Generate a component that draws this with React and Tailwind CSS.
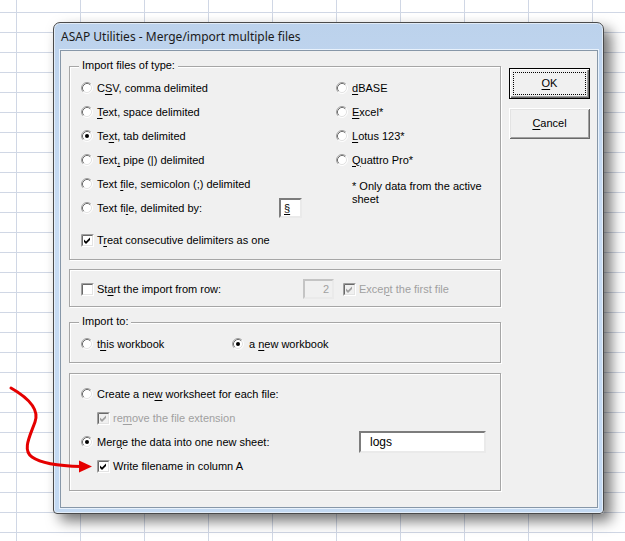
function K({ children }) {
  return <span className="underline underline-offset-[2px]">{children}</span>;
}

function Radio({ checked }) {
  return (
    <svg width="12" height="12" viewBox="0 0 12 12" className="shrink-0">
      <circle cx="6" cy="6" r="5" fill="#fff" />
      <path d="M2.11 9.89A5.5 5.5 0 0 1 9.89 2.11" fill="none" stroke="#a0a0a0" />
      <path d="M9.89 2.11A5.5 5.5 0 0 1 2.11 9.89" fill="none" stroke="#fff" />
      <path d="M2.82 9.18A4.5 4.5 0 0 1 9.18 2.82" fill="none" stroke="#6f6f6f" />
      <path d="M9.18 2.82A4.5 4.5 0 0 1 2.82 9.18" fill="none" stroke="#e3e3e3" />
      {checked && <circle cx="6" cy="6" r="2" fill="#000" />}
    </svg>
  );
}

function Check({ checked, disabled }) {
  return (
    <svg width="13" height="13" viewBox="0 0 13 13" className="shrink-0">
      <rect x="0" y="0" width="13" height="13" fill="#fff" />
      <rect x="1" y="1" width="11" height="11" fill="#e3e3e3" />
      <path d="M0.5 12.5V0.5H12.5" fill="none" stroke="#a0a0a0" />
      <path d="M1.5 11.5V1.5H11.5" fill="none" stroke="#696969" />
      <rect x="2" y="2" width="9" height="9" fill={disabled ? '#f0f0f0' : '#fff'} />
      {checked && (
        <polygon points="3,5.5 5,7.5 9,3.5 9,6 5,10 3,8" fill={disabled ? '#a0a0a0' : '#000'} />
      )}
    </svg>
  );
}

function Group({ legend, className, children }) {
  return (
    <div className={`relative border border-[#a6a6a6] shadow-[1px_1px_0_#fff,inset_1px_1px_0_#fff] ${className}`}>
      {legend && (
        <span className="absolute left-[9px] top-[-8px] bg-[#f0f0f0] px-[3px] leading-[13px]">
          {legend}
        </span>
      )}
      {children}
    </div>
  );
}

function RadioRow({ checked, children }) {
  return (
    <div className="flex h-6 items-center gap-1">
      <Radio checked={checked} />
      <span>{children}</span>
    </div>
  );
}

export default function App() {
  return (
    <div className="relative h-[541px] w-[625px] overflow-hidden bg-white bg-[linear-gradient(to_right,#d0d7e5_1px,transparent_1px),linear-gradient(to_bottom,#d0d7e5_1px,transparent_1px)] bg-[length:64px_20px] bg-[position:16px_12px] font-['Liberation_Sans',Arial,sans-serif] text-[11px] leading-[13px] text-black">
      <div className="absolute left-[53px] top-[22px] flex h-[492px] w-[551px] flex-col rounded-t-[7px] rounded-b-[4px] border border-[#4a4a4a] bg-[linear-gradient(to_bottom,#bcd2ec,#c9ddf4_40%,#c3d9f2)] shadow-[7px_7px_14px_rgba(0,0,0,0.55),inset_0_0_0_1px_rgba(255,255,255,0.55)]">
        <div className="flex h-[27px] items-center pl-[7px] font-['Noto_Sans',sans-serif] text-[12px] text-[#1b1b1b]">
          ASAP Utilities - Merge/import multiple files
        </div>
        <div className="ml-[6px] flex h-[458px] w-[538px] border border-[#8797a8] bg-[#f0f0f0] pl-[8px] pt-[15px] shadow-[0_0_0_1px_#e9f2fc]">
          <div className="flex w-[432px] flex-col">
            <Group legend="Import files of type:" className="pb-[7px] pl-[11px] pt-[9px]">
              <div className="flex">
                <div className="w-[255px]">
                  <RadioRow>
                    C<K>S</K>V, comma delimited
                  </RadioRow>
                  <RadioRow>
                    <K>T</K>ext, space delimited
                  </RadioRow>
                  <RadioRow checked>
                    Te<K>x</K>t, tab delimited
                  </RadioRow>
                  <RadioRow>
                    Text<K>,</K> pipe (|) delimited
                  </RadioRow>
                  <RadioRow>
                    Text <K>f</K>ile, semicolon (;) delimited
                  </RadioRow>
                  <div className="flex h-6 items-center">
                    <Radio />
                    <span className="ml-1 w-[182px]">
                      Text fi<K>l</K>e, delimited by:
                    </span>
                    <div className="flex h-[20px] w-[23px] items-center border-2 border-b-[#eaeaea] border-l-[#7c7c7c] border-r-[#eaeaea] border-t-[#7c7c7c] bg-white pl-[3px]">
                      <K>§</K>
                    </div>
                  </div>
                </div>
                <div>
                  <RadioRow>
                    <K>d</K>BASE
                  </RadioRow>
                  <RadioRow>
                    <K>E</K>xcel*
                  </RadioRow>
                  <RadioRow>
                    <K>L</K>otus 123*
                  </RadioRow>
                  <RadioRow>
                    <K>Q</K>uattro Pro*
                  </RadioRow>
                  <p className="mt-2 w-[154px] pl-4">* Only data from the active sheet</p>
                </div>
              </div>
              <div className="mt-2 flex h-6 items-center gap-[3px]">
                <Check checked />
                <span>
                  T<K>r</K>eat consecutive delimiters as one
                </span>
              </div>
            </Group>

            <Group className="mt-[9px] pb-[7px] pl-[11px] pt-[9px]">
              <div className="flex h-5 items-center">
                <Check />
                <span className="ml-[3px] w-[206px]">
                  St<K>a</K>rt the import from row:
                </span>
                <div className="flex h-[20px] w-[31px] items-center justify-end border-2 border-b-[#eaeaea] border-l-[#c4c4c4] border-r-[#eaeaea] border-t-[#c4c4c4] bg-[#f0f0f0] pr-[3px] text-[#a0a0a0]">
                  2
                </div>
                <span className="ml-[9px]">
                  <Check checked disabled />
                </span>
                <span className="ml-[3px] text-[#a0a0a0]">
                  Exce<K>p</K>t the first file
                </span>
              </div>
            </Group>

            <Group legend="Import to:" className="mt-[15px] pb-[8px] pl-[11px] pt-[11px]">
              <div className="flex h-5 items-center">
                <div className="flex w-[151px] items-center gap-1">
                  <Radio />
                  <span>
                    t<K>h</K>is workbook
                  </span>
                </div>
                <div className="flex items-center gap-[5px]">
                  <Radio checked />
                  <span>
                    a <K>n</K>ew workbook
                  </span>
                </div>
              </div>
            </Group>

            <Group className="mt-[10px] pb-[12px] pl-[11px] pt-2">
              <RadioRow>
                Create a ne<K>w</K> worksheet for each file:
              </RadioRow>
              <div className="flex h-6 items-center gap-[3px] pl-4 text-[#a0a0a0]">
                <Check checked disabled />
                <span>
                  re<K>m</K>ove the file extension
                </span>
              </div>
              <div className="flex h-6 items-center">
                <Radio checked />
                <span className="ml-1 w-[262px]">
                  Mer<K>g</K>e the data into one new sheet:
                </span>
                <div className="flex h-[22px] w-[127px] items-center border-2 border-b-[#eaeaea] border-l-[#7c7c7c] border-r-[#eaeaea] border-t-[#7c7c7c] bg-white pl-[9px] text-[12px]">
                  logs
                </div>
              </div>
              <div className="flex h-6 items-center gap-[3px] pl-4">
                <Check checked />
                <span>Write filename in column A</span>
              </div>
            </Group>
          </div>

          <div className="ml-[8px] flex flex-col pt-[2px]">
            <button
              type="button"
              className="flex h-[31px] w-[81px] items-center justify-center border border-black bg-[#f0f0f0] shadow-[inset_1px_1px_0_#fff,inset_-1px_-1px_0_#696969,inset_-2px_-2px_0_#a0a0a0]"
            >
              <span className="flex h-[23px] w-[73px] items-center justify-center border border-dotted border-black">
                <K>O</K>K
              </span>
            </button>
            <button
              type="button"
              className="mt-[9px] flex h-[31px] w-[81px] items-center justify-center bg-[#f0f0f0] shadow-[inset_1px_1px_0_#fff,inset_-1px_-1px_0_#696969,inset_2px_2px_0_#e3e3e3,inset_-2px_-2px_0_#a0a0a0]"
            >
              <span>
                <K>C</K>ancel
              </span>
            </button>
          </div>
        </div>
      </div>

      <svg className="absolute left-0 top-[380px]" width="100" height="100" viewBox="0 380 100 100">
        <path
          d="M11 388C25 396 40 408 35 422C30 436 22 450 32 457C42 464 60 466 81 466.5"
          fill="none"
          stroke="#e50000"
          strokeWidth="3"
          strokeLinecap="round"
        />
        <polygon points="79,460.5 92,466.5 79,472.5" fill="#e50000" />
      </svg>
    </div>
  );
}
